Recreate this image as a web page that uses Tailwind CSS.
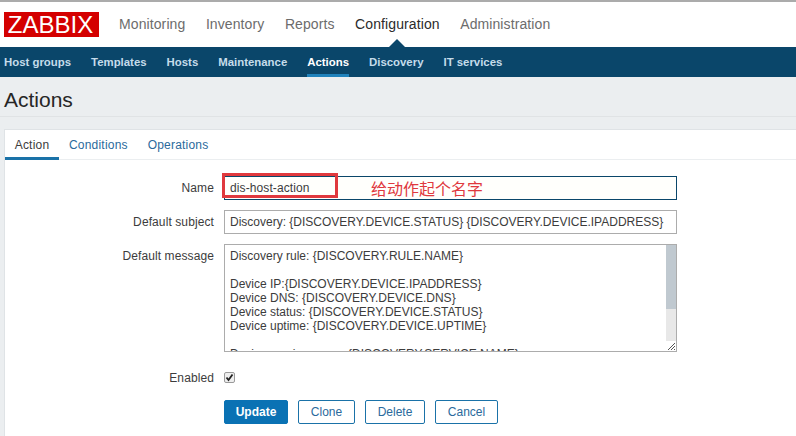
<!DOCTYPE html>
<html lang="en">
<head>
  <meta charset="UTF-8" />
  <title>Actions</title>
  <script src="https://cdn.jsdelivr.net/npm/@tailwindcss/browser@4"></script>
</head>
<body class="w-[796px] h-[436px] overflow-hidden bg-[#ebeef0] font-['Liberation_Sans',Arial,sans-serif] text-xs text-[#3c3c3c]">

  <!-- top menu -->
  <header class="relative h-[47px] bg-white border-t-2 border-[#ababab] flex items-start">
    <div class="ml-1 mt-[10px] w-[95px] h-[25px] bg-[#d40000] text-white text-[24px] leading-[26px] text-center pr-[2px]">ZABBIX</div>
    <nav class="ml-5 mt-[13px] flex gap-[20.5px] tracking-[0.1px] text-sm leading-[18px] text-[#6c6c6c]">
      <a>Monitoring</a>
      <a>Inventory</a>
      <a>Reports</a>
      <a class="text-[#2b2b2b]">Configuration</a>
      <a>Administration</a>
    </nav>
    <svg class="absolute left-[388px] top-[37px]" width="18" height="8" viewBox="0 0 18 8"><polygon points="9,0 1,8 17,8" fill="#0a466a" /></svg>
  </header>

  <!-- sub menu -->
  <nav class="h-[30px] bg-[#0a466a] flex gap-5 pl-1 font-bold text-[11.4px] text-[#c5dcea]">
    <a class="leading-[30px]">Host groups</a>
    <a class="leading-[30px]">Templates</a>
    <a class="leading-[30px]">Hosts</a>
    <a class="leading-[30px]">Maintenance</a>
    <a class="leading-[30px] text-white border-b-[3px] border-[#1f82bc] h-[30px]">Actions</a>
    <a class="leading-[30px]">Discovery</a>
    <a class="leading-[30px]">IT services</a>
  </nav>

  <!-- title -->
  <div class="h-[40px] border-b border-[#e0e3e5] pl-1 pt-[11px]">
    <h1 class="text-[21px] leading-6 text-[#262626]">Actions</h1>
  </div>

  <!-- card -->
  <section class="relative ml-1 mt-[12px] h-[320px] bg-white border-t border-l border-[#dfe3e6]">
    <div class="h-[30px] border-b border-[#ebeef0] flex text-xs tracking-[0.2px] leading-[31px] text-[#2a6a9c]">
      <a class="w-[54px] h-[30px] text-center text-[#3c3c3c] border-b-[3px] border-[#1a72a8]">Action</a>
      <a class="ml-[10px]">Conditions</a>
      <a class="ml-5">Operations</a>
    </div>

    <form class="relative pt-4 flex flex-col">
      <div class="flex items-center h-[24px]">
        <label class="w-[209px] text-right tracking-[0.1px] pb-[1px]">Name</label>
        <div class="ml-[10px] w-[453px] h-[24px] border border-[#0a466a] bg-[#fffffc] pl-[5px] leading-[23px] tracking-[0.1px]">dis-host-action</div>
      </div>
      <div class="flex items-center h-[24px] mt-[10px]">
        <label class="w-[209px] text-right tracking-[0.1px] pb-[1px]">Default subject</label>
        <div class="ml-[10px] w-[453px] h-[24px] border border-[#acacac] pl-[5px] leading-[23px] whitespace-nowrap">Discovery: {DISCOVERY.DEVICE.STATUS} {DISCOVERY.DEVICE.IPADDRESS}</div>
      </div>
      <div class="flex items-start mt-[10px]">
        <label class="w-[209px] text-right tracking-[0.1px] pt-1">Default message</label>
        <div class="relative ml-[10px] w-[453px] h-[108px] border border-[#acacac] pl-[5px] pt-1 leading-[14px] overflow-hidden whitespace-nowrap">
          <p>Discovery rule: {DISCOVERY.RULE.NAME}</p>
          <p class="mt-[14px]">Device IP:{DISCOVERY.DEVICE.IPADDRESS}</p>
          <p>Device DNS: {DISCOVERY.DEVICE.DNS}</p>
          <p>Device status: {DISCOVERY.DEVICE.STATUS}</p>
          <p>Device uptime: {DISCOVERY.DEVICE.UPTIME}</p>
          <p class="mt-[14px]">Device service name: {DISCOVERY.SERVICE.NAME}</p>
          <!-- scrollbar -->
          <div class="absolute right-0 top-0 w-[10px] h-full bg-[#e8e8e8]">
            <div class="h-[64px] bg-[#c0c9d0]"></div>
          </div>
          <svg class="absolute right-0 bottom-0 bg-white" width="10" height="10" viewBox="0 0 10 10"><path d="M2 9 9 2M5 9 9 5M8 9 9 8" stroke="#555" fill="none" /></svg>
        </div>
      </div>
      <div class="flex items-center h-[13px] mt-[19px]">
        <label class="w-[209px] text-right tracking-[0.1px]">Enabled</label>
        <div class="ml-[10px] w-[11px] h-[11px] border border-[#9a9a9a] rounded-[2px] bg-[#eeeeee] flex items-center justify-center">
          <svg width="9" height="9" viewBox="0 0 9 9"><path d="M1.5 4.5 3.5 7 7.5 1.5" stroke="#222" stroke-width="1.8" fill="none" /></svg>
        </div>
      </div>
      <div class="flex gap-[10px] ml-[219px] mt-[16px] h-[24px] text-xs leading-[22px] text-[#2a6a9c]">
        <button class="w-[64px] rounded-[2px] bg-[#0a72b4] text-white font-bold border border-[#0a72b4]">Update</button>
        <button class="w-[57px] rounded-[2px] border border-[#1a72a8]">Clone</button>
        <button class="w-[60px] rounded-[2px] border border-[#1a72a8]">Delete</button>
        <button class="w-[63px] rounded-[2px] border border-[#1a72a8]">Cancel</button>
      </div>

      <!-- annotation drawn over the screenshot -->
      <div class="absolute left-[217px] top-[13px] w-[116px] h-[25px] border-[3px] border-[#e0393e]"></div>
      <span class="absolute left-[366px] top-[18px] text-base leading-5 text-[#e0393e] font-['Noto_Sans_CJK_SC',sans-serif]">给动作起个名字</span>
    </form>
  </section>

</body>
</html>
